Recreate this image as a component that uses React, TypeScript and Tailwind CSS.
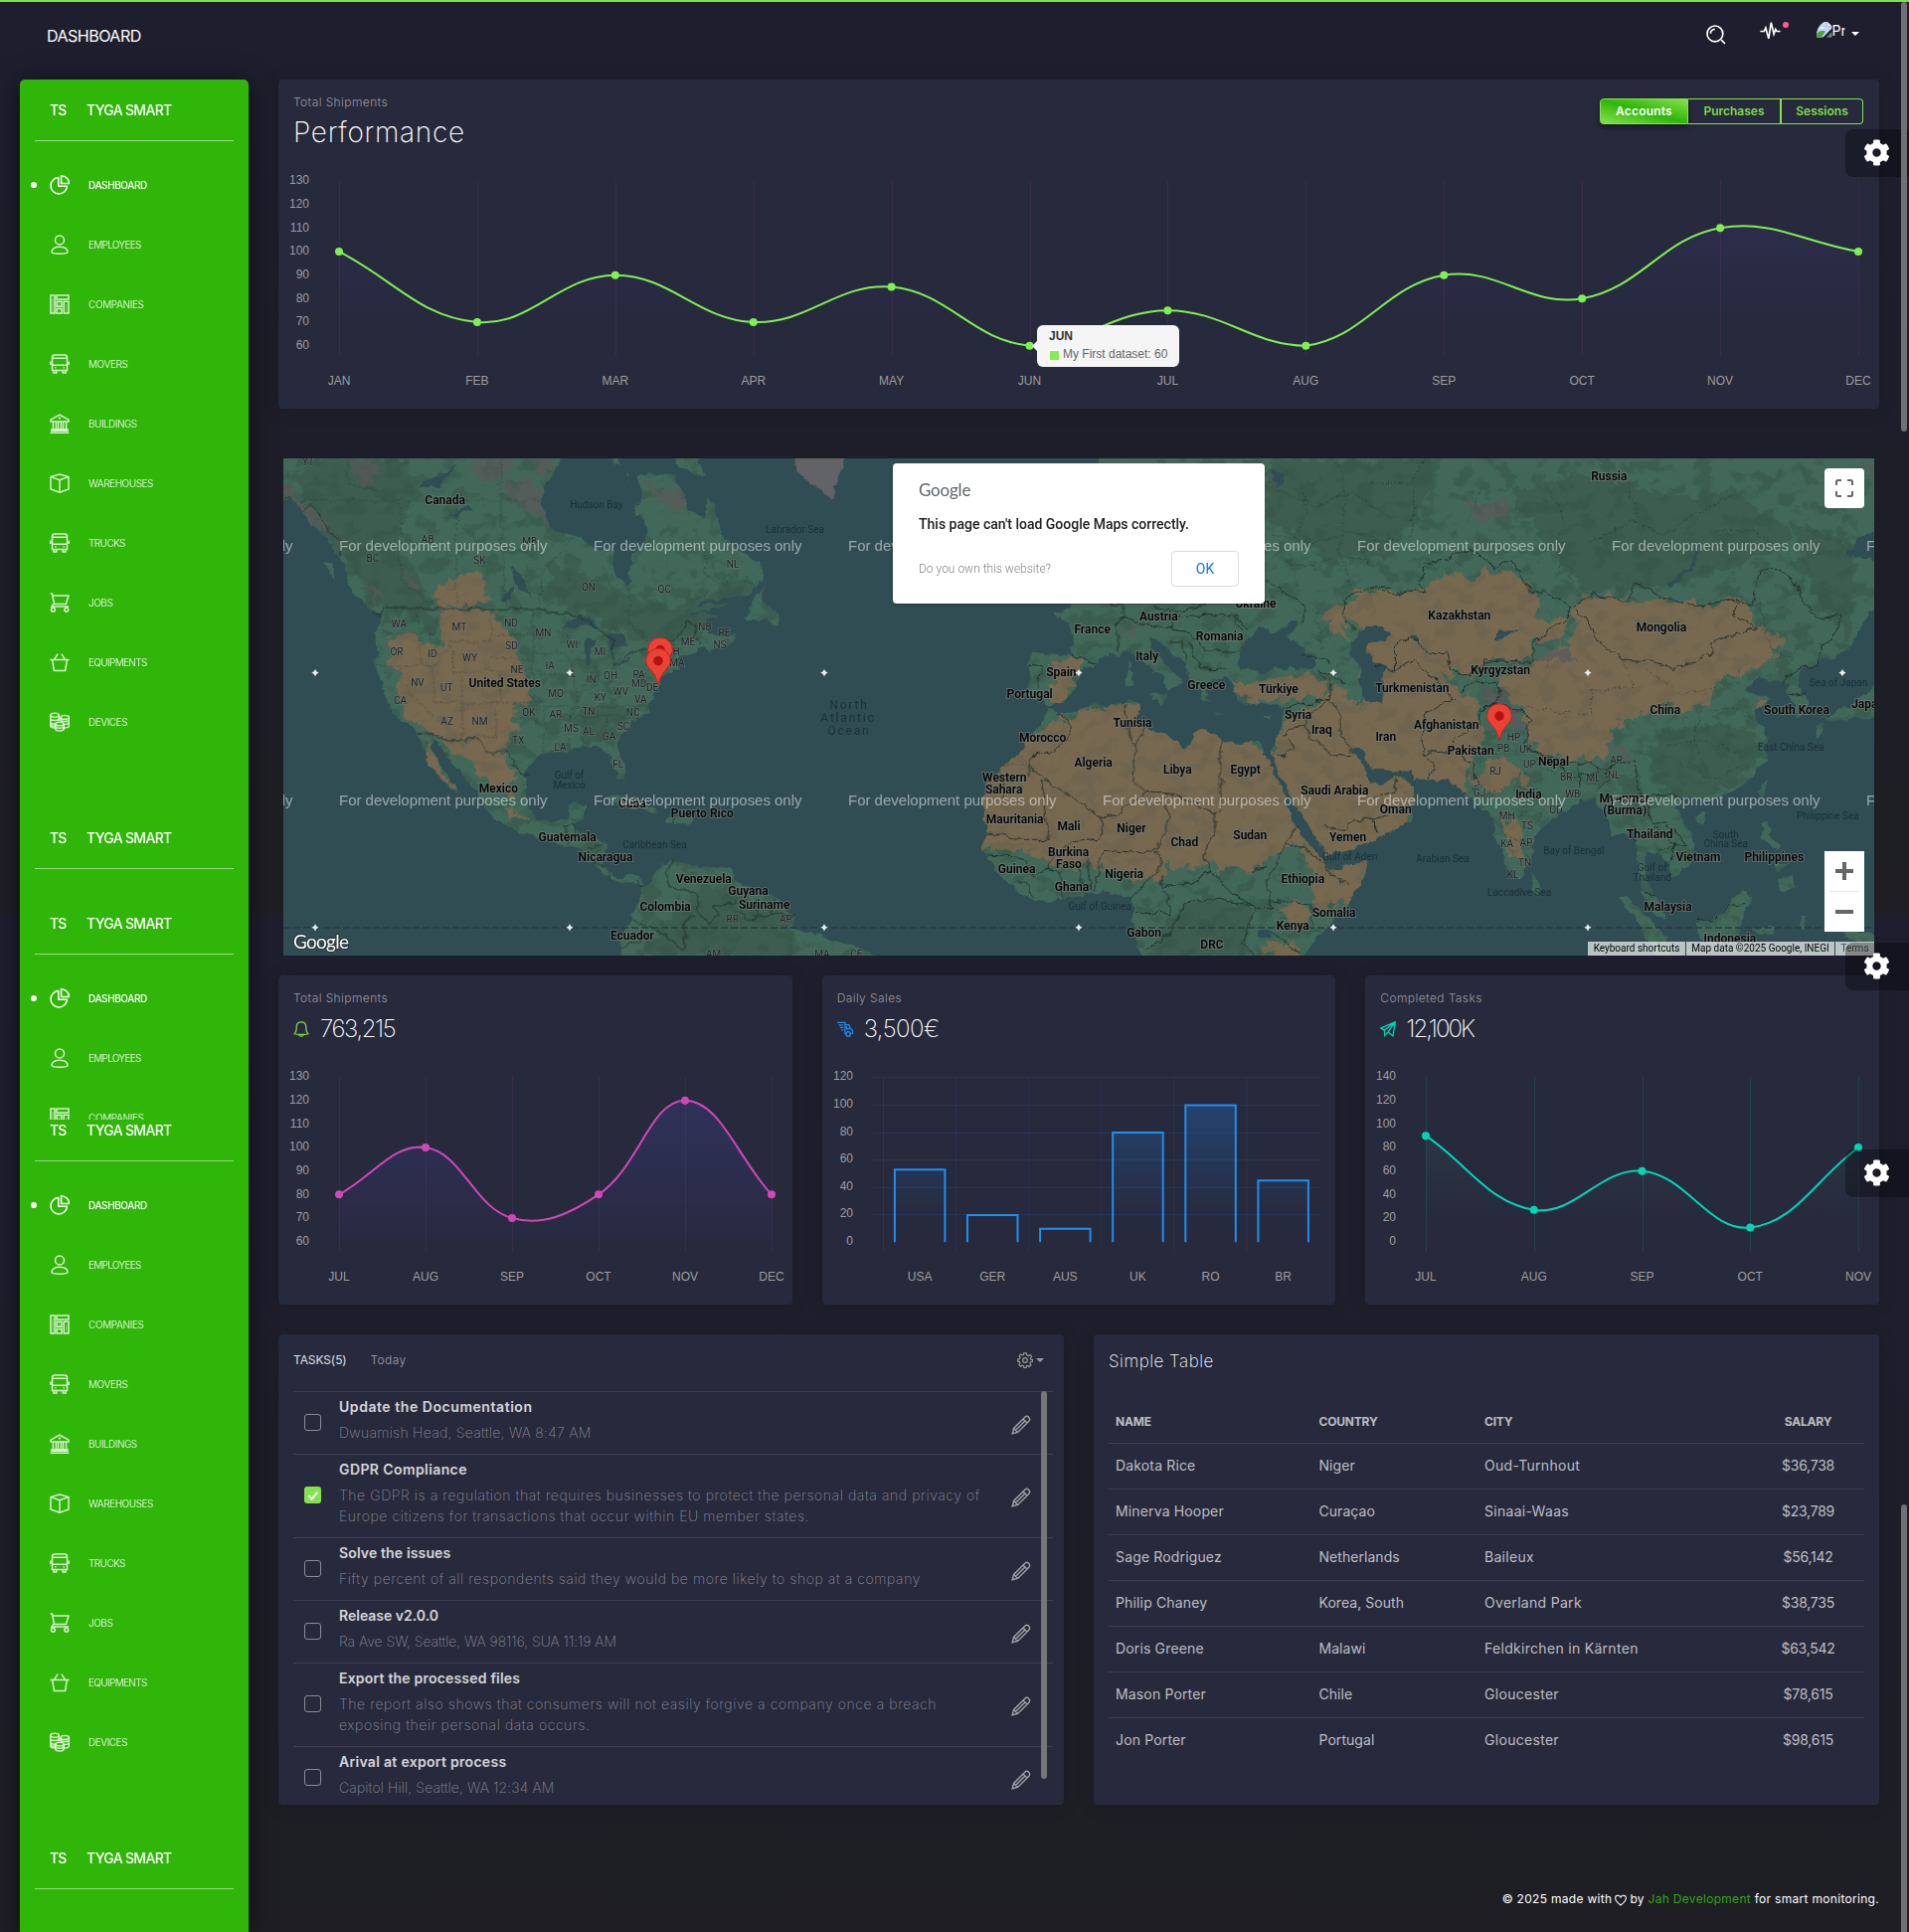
import React from "react";
import { FaCog } from "react-icons/fa";

/* ------------------------------------------------------------------ icons */

type IconName =
  | "pie" | "user" | "tiles" | "bus" | "bank" | "box" | "cart" | "basket" | "coins"
  | "bell" | "delivery" | "send" | "gear" | "pencil" | "heart" | "search" | "wave";

const ICONS: Record<IconName, React.ReactNode> = {
  pie: (
    <>
      <path d="M8.8 2.6A8.2 8.2 0 1 0 17.4 11.2H8.8Z" />
      <path d="M11.6 0.8V8.6H19.4A7.8 7.8 0 0 0 11.6 0.8Z" />
    </>
  ),
  user: (
    <>
      <circle cx="10" cy="5.4" r="4.5" />
      <path d="M2 17.6C2 14 5.2 12.3 10 12.3S18 14 18 17.6C18 19 14 19.2 10 19.2S2 19 2 17.6Z" />
    </>
  ),
  tiles: (
    <>
      <path d="M1 1H5V19H1ZM7 1H19V5H7ZM7 7.3H12V12.2H7ZM7 14.5H12V19H7ZM14.2 7.3H19V19H14.2Z" />
      <path d="M3 4V19M9.5 7.3V12M16.6 10V19" opacity=".35" />
    </>
  ),
  bus: (
    <>
      <path d="M2.5 3.5Q2.5 1 5 1H15Q17.5 1 17.5 3.5V16.5H2.5ZM2.5 4.3H17.5M2.5 11.2H17.5M4 16.5V19H6.8V16.5M13.2 16.5V19H16V16.5M.8 7.5V11M19.2 7.5V11" />
      <path d="M5.2 13.8H6.5M13.5 13.8H14.8" />
    </>
  ),
  bank: (
    <path d="M1 6.2 10 1 19 6.2V8H1ZM3.4 8V15.5M6.4 8V15.5M8.6 8V15.5M11.4 8V15.5M13.6 8V15.5M16.6 8V15.5M2 15.7H18V17.2H2ZM.6 19.2H19.4M10 3.6V5.4M8.8 4.5H11.2" />
  ),
  box: <path d="M10 1 19 3.6V16L10 19.2 1 16V3.6ZM1 3.6 10 6.6 19 3.6M10 6.6V19" />,
  cart: (
    <>
      <path d="M.6 1H2.4L4.6 11.4H16.4L19 3H3M3.8 11.4 2 14H19" />
      <circle cx="3.4" cy="17.2" r="1.9" />
      <circle cx="16.8" cy="17.2" r="1.9" />
    </>
  ),
  basket: <path d="M.4 7.4H19.6M2.6 7.4 4.4 18.4H15.6L17.4 7.4M4.6 7.2 8.2 1.6M15.4 7.2 11.8 1.6" />,
  coins: (
    <>
      <ellipse cx="5" cy="3.2" rx="4.2" ry="2" />
      <path d="M.8 3.2V14C.8 15.2 3 16 5.4 16M9.2 3.2V9M.8 6.6C.8 9.2 9.2 9.2 9.2 6.6M.8 10C.8 12.4 6 12.4 6.5 11.5M.8 12.5C1.5 14.5 5 14.3 5.8 13.8" />
      <ellipse cx="15.2" cy="5.4" rx="4.2" ry="1.9" />
      <path d="M11 5.4V9.4M19.4 5.4V14C19.4 15.2 17 16 14.4 16M11 8C12 10 19.4 10 19.4 8M14 12.4C17 12.6 19.4 12 19.4 10.8" />
      <ellipse cx="10" cy="12" rx="4.2" ry="1.8" />
      <path d="M5.8 12V17C5.8 19.7 14.2 19.7 14.2 17V12M5.8 14.5C6 16.8 14 16.8 14.2 14.5" />
    </>
  ),
  bell: (
    <path d="M1.2 15.6C3.8 14.2 4 12 4 7.5C4 3.5 6.5 1.2 10 1.2S16 3.5 16 7.5C16 12 16.2 14.2 18.8 15.6C18.8 17.2 1.2 17.2 1.2 15.6ZM7.2 17.2C7.6 19.6 12.4 19.6 12.8 17.2" />
  ),
  delivery: (
    <>
      <path d="M.4 1.6H10V15.4H12.4M1.8 4.8H8M3.4 8H8M5 11.2H8M10 4.4H14.6L17 9.6 19.4 11.4V15.6H18M12 6.6V9.6H16.4" />
      <circle cx="14" cy="16.2" r="2.8" />
    </>
  ),
  send: <path d="M1 8.6 19 1 16.2 18.6 10 13.6 6 18 5.4 11.4ZM19 1 5.4 11.4M19 1 10 13.6M6 18 10 13.6" />,
  gear: (
    <>
      <circle cx="10" cy="10" r="2.9" />
      <path d="M8.4 1H11.6L12.2 3.5 14.2 4.4 16.4 3.1 18.2 5.4 16.6 7.5 17.2 9 19.4 9.2V11.6L16.9 12.2 16.1 14 17.4 16.2 15.2 18 13 16.7 11.8 17.1 11.4 19.4H8.6L8.2 17 6.5 16.4 4.4 17.7 2.4 15.6 3.7 13.4 3 12 .8 11.5V8.7L3.1 8.2 3.9 6.4 2.6 4.4 4.6 2.4 6.6 3.7 7.9 3.3Z" />
    </>
  ),
  pencil: (
    <path d="M1.2 18.8 2.6 13.4 13.8 2.2C15.2.8 16.4 1 17.6 2.2S19 4.8 17.8 6.2L6.6 17.4ZM12 4 16 8M14 6 4.4 15.6M2.6 13.4 6.6 17.4" />
  ),
  heart: <path d="M10 18.4C4 13.8 1 10.6 1 6.8C1 1.4 7.8.4 10 5.2C12.2.4 19 1.4 19 6.8C19 10.6 16 13.8 10 18.4Z" />,
  search: (
    <>
      <circle cx="8.9" cy="8.9" r="7.9" />
      <path d="M4.4 8.7A4.4 4.4 0 0 1 8.7 4.4M15.2 15.2 19 19" />
    </>
  ),
  wave: <path d="M.4 10H4L5.6 6.6 8.4 17 10.8 1.6 13.4 12.6 15 8 16.2 10H19.6" />,
};

function Icon({ name, className, width = 1.4 }: { name: IconName; className: string; width?: number }) {
  return (
    <svg viewBox="0 0 20 20" className={className} fill="none" stroke="currentColor" strokeWidth={width}>
      {ICONS[name]}
    </svg>
  );
}

/* ---------------------------------------------------------------- sidebar */

const NAV: [IconName, string, string][] = [
  ["pie", "DASHBOARD", "tracking-[-0.4px]"],
  ["user", "EMPLOYEES", "tracking-[-0.75px]"],
  ["tiles", "COMPANIES", "tracking-[-0.4px]"],
  ["bus", "MOVERS", "tracking-[-0.45px]"],
  ["bank", "BUILDINGS", "tracking-[-0.55px]"],
  ["box", "WAREHOUSES", "tracking-[-0.5px]"],
  ["bus", "TRUCKS", "tracking-[-0.65px]"],
  ["cart", "JOBS", "tracking-[-0.5px]"],
  ["basket", "EQUIPMENTS", "tracking-[-0.7px]"],
  ["coins", "DEVICES", "tracking-[-0.5px]"],
];

function Brand() {
  return (
    <div className="mx-[15px] flex h-[62px] items-center border-b border-white/50 pl-[15px] text-sm font-medium text-white">
      <span className="w-[37px] tracking-[-0.9px]">TS</span>
      <span className="tracking-[-0.68px]">TYGA SMART</span>
    </div>
  );
}

function Nav() {
  return (
    <ul className="pt-[14px]">
      {NAV.map(([icon, label, tracking], i) => (
        <li
          key={label}
          className={
            i === 0
              ? "flex h-[60px] items-center text-[10px] font-medium text-white"
              : "flex h-[60px] items-center text-[10px] text-white/80"
          }
        >
          <span className={i === 0 ? "ml-[11px] size-1.5 rounded-full bg-white" : "ml-[11px] size-1.5"} />
          <Icon name={icon} className="ml-[13px] size-5" width={1.5} />
          <span className={`ml-[19px] ${tracking}`}>{label}</span>
        </li>
      ))}
    </ul>
  );
}

function Sidebar() {
  return (
    <aside className="relative z-10 ml-5 h-[1863px] w-[230px] shrink-0 overflow-hidden rounded-t-[5px] bg-[#2fb608] shadow-[0_2px_22px_0_rgba(0,0,0,0.2),0_2px_30px_0_rgba(0,0,0,0.35)]">
      <div className="h-[732px]">
        <Brand />
        <Nav />
      </div>
      <div className="h-[86px]">
        <Brand />
      </div>
      <div className="h-[228px] overflow-hidden">
        <Brand />
        <Nav />
      </div>
      <div className="-mt-5 h-[732px]">
        <Brand />
        <Nav />
      </div>
      <Brand />
    </aside>
  );
}

/* ----------------------------------------------------------------- charts */

type Pt = { x: number; y: number };
const TOP = 22;
const BOTTOM = 187.7;

function spline(pts: Pt[]) {
  const t = 0.4;
  const clamp = (v: number) => Math.min(BOTTOM, Math.max(TOP, v));
  const ctrl = pts.map((c, i) => {
    const p = pts[i - 1] ?? c;
    const n = pts[i + 1] ?? c;
    const a = Math.hypot(c.x - p.x, c.y - p.y);
    const b = Math.hypot(n.x - c.x, n.y - c.y);
    const fa = (t * a) / (a + b);
    const fb = (t * b) / (a + b);
    return {
      px: c.x - fa * (n.x - p.x),
      py: clamp(c.y - fa * (n.y - p.y)),
      nx: c.x + fb * (n.x - p.x),
      ny: clamp(c.y + fb * (n.y - p.y)),
    };
  });
  return pts
    .map((p, i) =>
      i === 0
        ? `M${p.x} ${p.y}`
        : `C${ctrl[i - 1].nx} ${ctrl[i - 1].ny} ${ctrl[i].px} ${ctrl[i].py} ${p.x} ${p.y}`
    )
    .join("");
}

function YTicks({ min, max, step }: { min: number; max: number; step: number }) {
  const ticks: number[] = [];
  for (let v = max; v >= min; v -= step) ticks.push(v);
  return (
    <g fill="#9e9e9e" fontSize="12" textAnchor="end">
      {ticks.map((v) => (
        <text key={v} x="31" y={TOP + ((max - v) / (max - min)) * (BOTTOM - TOP) + 3.3}>
          {v}
        </text>
      ))}
    </g>
  );
}

type LineProps = {
  id: string;
  width: number;
  labels: string[];
  data: number[];
  min: number;
  max: number;
  step: number;
  color: string;
  grid: string;
  fill: string;
  fillOpacity: number;
  fadeAt: number;
};

function LineChart(p: LineProps) {
  const left = 61;
  const right = p.width - 21;
  const pts = p.data.map((v, i) => ({
    x: left + (i * (right - left)) / (p.data.length - 1),
    y: TOP + ((p.max - v) / (p.max - p.min)) * (BOTTOM - TOP),
  }));
  const d = spline(pts);
  return (
    <svg width={p.width} height="251" className="block font-['Liberation_Sans',sans-serif]">
      <defs>
        <linearGradient id={p.id} gradientUnits="userSpaceOnUse" x1="0" y1="240" x2="0" y2="60">
          <stop offset={p.fadeAt} stopColor={p.fill} stopOpacity="0" />
          <stop offset="1" stopColor={p.fill} stopOpacity={p.fillOpacity} />
        </linearGradient>
      </defs>
      {pts.map((pt, i) => (
        <line key={i} x1={Math.round(pt.x) + 0.5} x2={Math.round(pt.x) + 0.5} y1={TOP} y2="198" stroke={p.grid} />
      ))}
      <path d={`${d}L${right} ${BOTTOM}L${left} ${BOTTOM}Z`} fill={`url(#${p.id})`} />
      <path d={d} fill="none" stroke={p.color} strokeWidth="2" />
      {pts.map((pt, i) => (
        <circle key={i} cx={pt.x} cy={pt.y} r="4" fill={p.color} />
      ))}
      <YTicks min={p.min} max={p.max} step={p.step} />
      <g fill="#9e9e9e" fontSize="12" textAnchor="middle">
        {pts.map((pt, i) => (
          <text key={i} x={pt.x} y="227">
            {p.labels[i]}
          </text>
        ))}
      </g>
    </svg>
  );
}

const BARS: [string, number][] = [
  ["USA", 53],
  ["GER", 20],
  ["AUS", 10],
  ["UK", 80],
  ["RO", 100],
  ["BR", 45],
];

function BarChart() {
  const y = (v: number) => TOP + ((120 - v) / 120) * (BOTTOM - TOP) + 0.8;
  return (
    <svg width="516" height="251" className="block font-['Liberation_Sans',sans-serif]">
      <defs>
        <linearGradient id="bars" gradientUnits="userSpaceOnUse" x1="0" y1="240" x2="0" y2="60">
          <stop offset="0.4" stopColor="#1d8cf8" stopOpacity="0" />
          <stop offset="1" stopColor="#1d8cf8" stopOpacity="0.24" />
        </linearGradient>
      </defs>
      {[120, 100, 80, 60, 40, 20].map((v) => (
        <line key={v} x1="51" x2="501" y1={Math.floor(y(v)) + 0.5} y2={Math.floor(y(v)) + 0.5} stroke="rgba(29,140,248,0.12)" />
      ))}
      {BARS.map(([label, v], i) => {
        const x = 61.5 + i * 73.1;
        return (
          <g key={label}>
            <line x1={x} x2={x} y1={TOP} y2="198" stroke="rgba(29,140,248,0.12)" />
            <path
              d={`M${x + 11.4} ${BOTTOM + 0.5}V${y(v)}H${x + 61.9}V${BOTTOM + 0.5}`}
              fill="url(#bars)"
              stroke="#1f8ef1"
              strokeWidth="2"
            />
            <text x={x + 36.6} y="227" fill="#9e9e9e" fontSize="12" textAnchor="middle">
              {label}
            </text>
          </g>
        );
      })}
      <YTicks min={0} max={120} step={20} />
    </svg>
  );
}

const MONTHS = ["JAN", "FEB", "MAR", "APR", "MAY", "JUN", "JUL", "AUG", "SEP", "OCT", "NOV", "DEC"];
const CARD = "rounded bg-[#27293d] shadow-[0_1px_20px_0_rgba(0,0,0,0.1)]";

function PerformanceCard() {
  return (
    <section className={`relative h-[331px] ${CARD}`}>
      <div className="flex h-20 justify-between pl-[15px] pr-4">
        <div className="pt-[14px]">
          <h5 className="text-xs font-light leading-[18px] tracking-[0.4px] text-[#9a9a9a]">Total Shipments</h5>
          <h2 className="pt-1 text-[28px] font-extralight leading-[34px] tracking-[0.7px] text-white">Performance</h2>
        </div>
        <div className="mt-[19px] flex h-[26px] text-xs font-semibold text-[#7edc48]">
          <div className="flex w-[89px] items-center justify-center rounded-l border border-[#86e14f] bg-[linear-gradient(to_bottom_left,#86e14f,#2fb608,#86e14f)] tracking-[0.2px] text-white shadow-[0_3px_6px_rgba(0,0,0,0.35)]">
            Accounts
          </div>
          <div className="flex w-[94px] items-center justify-center border border-l-0 border-r-2 border-[#86e14f]">Purchases</div>
          <div className="flex w-[82px] items-center justify-center rounded-r border border-l-0 border-[#86e14f]">Sessions</div>
        </div>
      </div>
      <LineChart
        id="perf"
        width={1610}
        labels={MONTHS}
        data={[100, 70, 90, 70, 85, 60, 75, 60, 90, 80, 110, 100]}
        min={60}
        max={130}
        step={10}
        color="#7ff052"
        grid="rgba(225,78,202,0.1)"
        fill="#4848b0"
        fillOpacity={0.13}
        fadeAt={0.4}
      />
      <div className="absolute left-[763px] top-[247px] h-[42px] w-[143px] rounded-md bg-[#f5f5f5] pl-3 pt-1 font-['Liberation_Sans',sans-serif] text-xs">
        <span className="absolute -left-[5px] top-4 border-y-[5px] border-r-[5px] border-y-transparent border-r-[#f5f5f5]" />
        <div className="font-bold leading-[15px] text-[#333]">JUN</div>
        <div className="mt-[3px] flex items-center leading-[14px] text-[#666]">
          <span className="mr-[3px] mt-0.5 size-[11px] border border-white bg-[#7ff052]" />
          My First dataset: 60
        </div>
      </div>
    </section>
  );
}

type StatProps = { title: string; icon: IconName; tint: string; value: string; tracking: string; children: React.ReactNode };

function StatCard({ title, icon, tint, value, tracking, children }: StatProps) {
  return (
    <section className={`h-[331px] ${CARD}`}>
      <div className="h-20 pl-[15px] pt-[14px]">
        <h5 className="text-xs font-light leading-[18px] tracking-[0.4px] text-[#9a9a9a]">{title}</h5>
        <h3 className={`flex items-center pt-[5px] text-[24px] font-extralight leading-[34px] text-white ${tracking}`}>
          <Icon name={icon} className={tint} width={1.6} />
          {value}
        </h3>
      </div>
      {children}
    </section>
  );
}

/* -------------------------------------------------------------------- map */

type Frame = "west" | "mid" | "east";
const FRAMES: Record<Frame, [number, number, number, number]> = {
  west: [0.3954, 0.3333, -5, -6],
  mid: [0.3333, 0.3333, 595, -6],
  east: [0.3444, 0.3476, 1095, -6],
};
const matrix = (f: Frame) => `translate(${FRAMES[f][2]} ${FRAMES[f][3]}) scale(${FRAMES[f][0]} ${FRAMES[f][1]})`;

const LAND: Record<Frame, string[]> = {
  west: [
    "M-20,-30L735,-30L700,60L680,100L672,150L680,200L700,240L740,245L770,260L800,285L850,300L855,370L885,410L900,390L895,310L930,280L940,235L920,190L905,185L925,120L915,80L940,65L1010,70L1030,120L1045,170L1080,200L1100,135L1115,190L1130,260L1150,280L1200,315L1230,345L1232,385L1200,425L1130,440L1075,450L1040,500L1075,480L1115,495L1085,510L1100,545L1135,560L1165,545L1140,585L1100,600L1085,585L1060,600L1020,615L1010,640L1020,655L985,665L965,700L955,735L940,760L945,785L900,815L870,855L865,885L882,940L880,985L865,985L850,950L845,915L820,890L780,885L740,900L700,905L650,925L630,960L630,1030L640,1080L660,1110L700,1115L735,1100L740,1065L785,1060L775,1100L755,1125L760,1145L800,1160L838,1175L825,1230L830,1250L860,1285L910,1270L930,1300L870,1300L840,1285L800,1240L760,1195L700,1180L640,1155L560,1115L520,1070L515,1030L480,990L440,930L415,890L385,860L390,900L420,950L440,990L460,1030L425,1005L400,960L380,940L375,900L352,845L330,820L290,785L275,740L250,660L250,550L260,490L235,470L190,420L160,340L155,310L120,260L85,220L60,180L30,145L-20,135Z",
    "M1235,410L1205,450L1188,500L1240,505L1270,525L1275,490L1255,470L1230,450Z",
    "M1000,1225L985,1245L955,1260L940,1300L925,1310L920,1345L900,1400L875,1460L868,1560L1575,1560L1470,1490L1410,1475L1380,1455L1315,1440L1310,1400L1270,1345L1200,1310L1160,1290L1150,1255L1100,1255L1030,1240Z",
    "M830,1040L870,1035L960,1070L965,1085L900,1075L850,1050Z",
    "M990,1095L1060,1105L1050,1120L985,1118Z",
    "M850,10L870,10L868,40L855,40ZM1000,-10L1060,-10L1085,70L1060,65L1020,40ZM885,60L893,65L890,85Z",
    "M1035,480L1060,465L1150,455L1100,475ZM120,330L140,335L145,385L125,350ZM195,430L240,440L255,475L225,460Z",
  ],
  mid: [
    "M690,-30L1620,-30L1620,1110L1560,1140L1460,1190L1355,1220L1345,1180L1290,1100L1240,1010L1200,925L1190,900L1205,880L1228,830L1230,775L1210,765L1165,755L1125,765L1090,740L1075,690L1060,680L1015,690L1035,715L1000,720L1010,755L985,755L985,720L950,690L940,640L890,600L850,565L830,555L830,580L850,610L880,640L930,690L905,705L885,720L870,680L830,650L790,620L765,590L730,615L690,610L670,635L640,650L610,690L600,730L565,755L520,765L500,740L480,745L455,735L470,660L462,620L475,605L540,608L590,610L600,560L590,520L560,500L535,485L590,470L600,400Z",
    "M515,795L525,770L560,790L600,780L640,765L720,760L795,750L800,780L790,800L820,835L880,850L900,870L940,890L960,870L960,845L1000,838L1040,865L1100,880L1150,870L1170,885L1180,920L1200,960L1240,1050L1260,1110L1300,1170L1345,1225L1370,1260L1430,1245L1487,1235L1480,1270L1440,1350L1390,1410L1320,1480L1275,1560L825,1560L790,1470L775,1430L785,1380L770,1345L700,1325L640,1335L600,1345L540,1350L485,1358L430,1320L380,1280L340,1225L323,1180L340,1140L325,1060L330,1000L380,950L440,910L460,860L490,820Z",
    "M765,630L775,630L773,650L765,655ZM760,660L780,665L775,705L762,705ZM830,735L880,730L870,758ZM1020,787L1055,792L1050,796ZM1170,797L1200,790L1190,802Z",
  ],
  east: [
    "M0,-30L1500,-30L1500,215L1420,250L1385,300L1490,315L1490,430L1440,480L1400,560L1340,600L1290,610L1250,640L1240,680L1275,720L1280,750L1240,770L1235,730L1210,700L1215,670L1190,660L1160,660L1130,650L1090,690L1120,710L1170,710L1120,745L1130,780L1155,830L1150,890L1100,950L1050,985L990,1010L960,1000L910,1000L885,1030L920,1080L945,1130L940,1180L880,1230L870,1190L835,1160L795,1155L800,1230L850,1330L860,1350L830,1350L790,1280L775,1180L765,1100L700,1110L690,1060L650,1000L610,1010L560,1040L510,1080L470,1120L465,1180L430,1240L400,1220L370,1140L345,1040L320,1030L265,980L230,950L160,945L85,945L70,935L0,900Z",
    "M470,1215L493,1250L488,1275L465,1265Z",
    "M718,1285L760,1295L820,1360L880,1430L870,1480L840,1480L780,1370Z",
    "M945,1360L1000,1350L1080,1265L1110,1290L1085,1340L1070,1400L1000,1420L960,1410Z",
    "M1135,1070L1160,1070L1160,1110L1190,1140L1180,1150L1140,1120ZM1190,1240L1225,1220L1230,1260L1200,1275ZM1170,1180L1210,1190L1190,1220Z",
    "M1150,950L1155,960L1140,1000L1130,980ZM940,1050L975,1042L965,1070L945,1068Z",
    "M1290,790L1320,790L1300,835ZM1310,770L1400,730L1490,660L1490,760L1380,775Z",
    "M1110,1380L1180,1370L1170,1400L1130,1395ZM1250,1345L1265,1350L1255,1390ZM1350,1375L1470,1395L1470,1440L1400,1410Z",
  ],
};

const DESERT: Record<Frame, string[]> = {
  west: [
    "M410,475L540,475L600,560L610,620L640,720L640,750L600,760L610,820L590,870L570,900L550,915L505,865L440,870L385,850L350,820L310,760L310,690L290,640L290,560L320,540L350,560L400,600L440,570L400,520Z",
    "M400,420L450,370L530,370L530,450L460,470L400,460Z",
    "M410,870L500,870L560,900L610,960L590,1040L540,1010L510,960L450,910ZM375,865L400,930L440,990L462,1028L430,1010L380,940Z",
    "M560,1060L600,1070L635,1105L600,1100Z",
  ],
  mid: [
    "M490,840L600,790L720,765L795,745L810,780L800,800L820,825L880,840L900,860L940,880L950,860L960,835L1000,828L1040,855L1100,870L1180,880L1190,920L1210,960L1250,1050L1270,1110L1310,1170L1345,1215L1370,1250L1430,1235L1507,1225L1500,1270L1450,1350L1330,1380L1320,1300L1300,1200L1250,1180L1190,1220L1160,1260L1000,1245L920,1260L880,1240L860,1290L800,1290L700,1250L640,1250L600,1250L520,1240L440,1200L320,1195L303,1180L320,1140L305,1060L310,1000L360,950L430,900L450,860Z",
    "M1225,810L1340,760L1380,700L1440,740L1490,770L1620,780L1620,1110L1460,1210L1345,1240L1325,1180L1270,1100L1230,1000L1190,920L1205,880Z",
    "M1085,700L1170,690L1300,670L1370,690L1340,740L1230,745L1150,765L1100,735Z",
    "M520,640L560,620L640,640L600,670L610,700L570,760L530,750L540,690Z",
    "M1410,490L1450,430L1520,415L1620,425L1620,760L1540,760L1545,700L1490,590L1560,560L1530,525L1480,530Z",
    "M1210,1370L1310,1360L1310,1430L1260,1440ZM1180,1480L1270,1480L1260,1540L1170,1510ZM1360,480L1420,460L1420,560L1370,540Z",
  ],
  east: [
    "M-20,400L60,410L160,405L180,360L240,350L300,370L330,340L420,350L460,380L490,440L480,490L560,480L560,530L470,550L470,600L330,600L280,650L200,640L260,700L320,720L310,760L320,830L290,900L270,985L160,965L85,965L-20,920Z",
    "M580,455L640,410L760,430L850,420L950,440L1060,425L1110,450L1120,500L1200,540L1180,590L1080,640L1000,660L980,720L900,760L860,730L780,760L690,800L680,880L560,895L480,850L440,780L440,740L380,690L360,650L470,610L560,560L600,500Z",
    "M300,920L360,880L430,900L400,960L360,985L290,970Z",
    "M-60,1000L0,970L70,925L80,970L135,1000L110,1060L0,1125L-60,1140Z",
    "M380,1060L420,1060L440,1180L410,1170ZM420,930L470,940L460,970L420,960ZM1120,720L1160,715L1130,745Z",
  ],
};

/* Oman lies outside the mainland outline of the eastern frame */
const OMAN = "M-60,1000L0,970L70,935L80,970L125,1000L100,1060L0,1115L-60,1140Z";

const ROCK: Record<Frame, string[]> = {
  west: [
    "M490,-20L560,-20L600,40L540,90L500,70ZM570,95L640,80L690,150L695,230L640,180L590,140ZM640,-20L735,-20L700,60L660,60ZM935,90L1030,110L1045,175L970,160L930,120ZM13,100L50,130L110,200L160,270L130,250L60,180L13,140ZM180,20L240,20L250,90L215,100ZM215,395L270,430L250,450ZM310,360L350,390L340,410Z",
  ],
  mid: ["M730,530L800,525L770,550Z"],
  east: [
    "M320,680L380,700L460,790L440,810L380,760ZM690,850L740,850L770,900L720,890ZM450,600L560,570L600,600L500,610ZM270,150L370,140L400,180L310,200ZM1440,20L1470,20L1470,90Z",
  ],
};

const FOREST: Record<Frame, string[]> = {
  west: [
    "M50,20L330,20L340,130L300,260L380,420L400,560L350,500L250,460L170,330L90,210L60,130Z",
    "M690,330L880,420L1000,470L1180,380L1220,390L1060,560L900,560L760,480L690,450Z",
    "M1080,1300L1310,1400L1300,1518L900,1518L1000,1400Z",
    "M720,800L860,740L900,800L800,870Z",
  ],
  mid: ["M930,1360L1090,1350L1140,1380L1120,1540L820,1540L870,1420Z", "M1190,20L1560,20L1560,300L1380,330L1250,240L1180,200Z"],
  east: [
    "M0,20L200,20L130,200L0,260ZM400,110L640,60L860,120L1060,110L1240,240L1060,330L840,400L620,400L500,240Z",
    "M840,800L1100,790L1150,880L1000,1000L880,1000L800,900ZM700,930L770,930L830,1060L760,1060ZM1230,200L1420,280L1400,540L1300,440Z",
  ],
};

const WATER: Record<Frame, string[]> = {
  west: [
    "M720,530L765,490L800,505L815,530L770,520L745,530ZM785,560L805,560L790,640L778,645ZM830,545L880,550L885,585L855,590L850,610ZM850,650L895,620L890,638ZM590,340L620,370L645,440L625,420L600,390ZM355,110L390,75L460,45L420,80L410,105ZM430,190L480,165L490,175L445,192ZM565,450L600,400L590,450Z",
  ],
  mid: [
    "M1100,600L1125,555L1165,530L1200,545L1240,520L1275,505L1265,540L1240,555L1320,610L1325,655L1270,650L1210,650L1170,665L1110,655L1090,640Z",
    "M1430,575L1480,525L1530,525L1560,550L1490,580L1480,600L1520,650L1540,690L1530,755L1480,750L1455,700L1470,670L1440,620Z",
    "M1440,895L1460,890L1500,950L1560,965L1620,960L1620,1000L1570,975L1530,1010L1500,1000L1470,940Z",
    "M1195,50L1230,60L1235,100L1215,105ZM1155,1440L1195,1440L1190,1465L1160,1465ZM1170,900L1180,905L1205,950L1195,945Z",
  ],
  east: ["M0,505L50,515L50,545L0,550ZM0,600L40,620L30,650L0,640ZM945,280L955,290L930,345L870,390L860,385L920,340ZM355,540L370,515L430,510L400,525L370,545ZM110,530L130,530L130,560ZM660,410L680,410L680,425Z"],
};

const BORDERS: Record<Frame, string[]> = {
  west: [
    "M240,485L262,490L262,472H667L690,485L765,490L825,545L850,570L850,645L895,605L935,600L980,570L1010,565L1040,515L1060,520L1060,560L1072,580",
    "M352,845L385,848L440,870H480V862L505,865L550,915L562,900L578,902L612,965L638,972",
    "M13,135L35,140L60,180L88,155L130,240L162,275L160,315",
    "M1005,1225L985,1275L1000,1315L1065,1330L1065,1380L1090,1420L1120,1400L1110,1365L1150,1360L1165,1350",
    "M900,1410L985,1455L1030,1505L1035,1410L1065,1400M1175,1380L1190,1410L1250,1395L1310,1395M870,1500L940,1460M1215,1350L1220,1395M1265,1350L1255,1390",
    "M735,1180L760,1145L755,1120L720,1130L740,1160M790,1195L838,1175M800,1240L830,1250M840,1270L845,1290M910,1290L925,1305M1000,1095L1002,1118",
  ],
  mid: [
    "M467,975V920L540,900L590,855L585,800L540,790M467,948L640,1075L685,1105L740,1085L815,1025L780,985L785,880L760,820L755,760",
    "M815,1025L885,1025L1025,1090M1025,1160V1085L1043,1083V865M885,1030L880,1140L848,1195L800,1205L740,1205L690,1198L675,1250L660,1325M780,890L810,850L808,830",
    "M685,1105L685,1150L670,1168L600,1175L560,1200L530,1230L520,1260M530,992H502L522,1165H420L380,1150L340,1150M390,1050V1000",
    "M1025,1160L1005,1165L990,1220L1020,1270L1080,1335L1150,1370L1200,1370L1180,1300L1210,1250L1240,1180L1275,1120M1130,1265L1165,1250L1185,1250",
    "M848,1200L865,1240L820,1300L765,1350M865,1270L870,1310L930,1305L1020,1265M870,1320L900,1390H790M930,1360L1040,1345L1150,1370L1110,1480L1140,1518M1195,1450L1285,1510M1355,1240L1370,1270L1430,1300",
    "M1320,1370V1430M1200,1350L1260,1360L1320,1365M930,1360L900,1440L820,1500M1240,1180L1300,1200L1350,1240M340,1215L420,1220L470,1250L480,1280L520,1255L560,1265L570,1350M610,1240L630,1330M640,1225L650,1320M430,1290L460,1310L485,1345",
    "M585,612L668,635M470,640L505,645L490,700L487,715M730,600L735,560L720,520L760,500M740,500L820,520L890,530L900,500L1000,490L1080,490L1120,530M710,455L740,460L755,500M840,465L900,480L1000,465L960,455M890,530L950,540L1000,600L1095,600M885,570L930,570L940,640M950,570L980,650L1060,655M1075,490L1110,540M1180,380L1240,430L1300,460L1290,510M1160,380L1190,400",
    "M1230,770L1340,750L1375,745L1375,700L1340,655L1380,670L1420,700M1375,750L1395,780L1400,840L1440,900M1375,745L1310,790L1300,820L1230,850M1285,830L1385,915L1440,910M1250,860L1265,890L1240,910L1210,910M1353,1130L1420,1135L1445,1110L1520,1100L1545,1090M1500,1110L1520,1145M1290,608L1370,635M1410,490L1420,440L1510,400L1560,410M1420,450L1410,490L1450,535",
  ],
  east: [
    "M590,450L640,410L740,430L775,375L850,420L950,445L1050,425L1075,435L1055,475L1120,505L990,550L990,580L950,605L880,625L820,605L735,598L650,545L640,495Z",
    "M0,385L60,410L100,400L160,405L140,380L155,325L285,285L320,300L360,335L410,310L465,405L500,400L580,445L560,495L510,510L500,540L470,550L470,605L330,600L280,645L235,630L220,580L170,580L110,535L68,550V630L10,620",
    "M1060,425L1110,440L1130,345L1190,335L1235,370L1255,435L1305,480L1370,470L1350,540L1310,560L1305,610L1235,635L1195,665M1220,710L1265,695",
    "M68,630L120,605L200,670L240,715L200,730L155,755L150,860L185,910L160,945M150,870L230,865L240,830L310,790L320,740L380,710L360,660L290,670L260,690M280,650L320,610L370,605",
    "M310,760L350,720L440,750L465,770L450,800L450,855L560,895L600,900L640,890L665,920L770,890L775,970L800,1000L850,990L910,1000M250,870L290,900L310,960L270,985M600,905L605,935L665,930M600,930L610,1010M650,985L690,950L690,920M450,855L500,880L570,920",
    "M760,1080L770,1130M800,1000L820,1080L885,1130L870,1200M820,1075L860,1070L920,1140L840,1145L835,1160M800,1270L830,1280M950,1350L1000,1355L1040,1310L1090,1305M70,940V980L0,1000M0,1060L15,1100",
  ],
};

const REGIONS: Record<Frame, string> = {
  west: "M13,145H672M310,145V380L400,470M453,145V470M568,18V230L578,470M178,18V100L250,115M667,470V370L755,250M892,400V520L930,560M1085,310V370L1115,390H1230M262,545H410M352,472L360,560V642M250,642H395V755H675M310,642V690L388,790M395,642L440,572V660H565V755M440,572H540V472M540,550H648M540,618L640,625M648,470V600L650,720L675,760V910M466,660V870M555,760V855H500M598,760V800L680,820M655,607H730M640,670H740M710,540L770,580M735,630H780M745,640L760,730L740,800V890M808,650V700L760,740M675,765H940M860,650L840,720M740,797L880,795M830,797L845,875M780,800V880M880,640L990,640",
  mid: "M390,942H465M1180,100L1330,160L1440,120L1560,200M1200,250L1320,270L1440,240L1560,280M1240,330L1330,350L1400,310L1500,330M1280,60L1300,180L1250,300L1280,420M1400,20L1420,150L1400,300L1440,400M1330,480L1350,600M1043,1048H1225",
  east: "M0,90L120,85L150,20M130,90L110,250L0,260M280,200L320,100M500,70L560,200L520,300L600,380M640,260L760,200L860,240L940,180L1060,120M750,100L780,200M1000,230L1100,220L1200,280L1240,330M640,690L760,680L730,600M640,690L640,760L450,740M800,630L900,700L1000,680L1080,620M900,780L960,740L1060,740L1120,780M860,850L960,830L1080,870M900,900L1000,950L1090,900M960,750L940,830L980,930M1040,640L1100,700M1130,440L1160,560L1230,600M360,980L460,960L520,1000M400,1060L470,1030L520,1060M380,1110L460,1120M290,880L360,870L440,860M480,910L600,940",
};

const COUNTRIES: Record<Frame, [string, number, number][]> = {
  west: [
    ["Canada", 424, 142], ["United States", 576, 694], ["Mexico", 560, 1014], ["Cuba", 900, 1057], ["Puerto Rico", 1078, 1087],
    ["Guatemala", 735, 1161], ["Nicaragua", 832, 1221], ["Venezuela", 1082, 1287], ["Guyana", 1195, 1323], ["Suriname", 1236, 1365],
    ["Colombia", 984, 1369], ["Ecuador", 900, 1457],
  ],
  mid: [
    ["Ukraine", 1149, 454], ["Austria", 856, 493], ["France", 656, 533], ["Romania", 1040, 553], ["Italy", 821, 613], ["Spain", 562, 662],
    ["Greece", 1000, 700], ["Türkiye", 1218, 712], ["Portugal", 467, 728], ["Syria", 1277, 790], ["Iraq", 1348, 837], ["Tunisia", 777, 815],
    ["Morocco", 506, 861], ["Algeria", 659, 934], ["Libya", 913, 955], ["Egypt", 1118, 955], ["Western", 391, 981], ["Sahara", 389, 1017],
    ["Saudi Arabia", 1387, 1019], ["Mauritania", 422, 1105], ["Mali", 585, 1126], ["Niger", 774, 1134], ["Chad", 934, 1175],
    ["Sudan", 1132, 1153], ["Yemen", 1427, 1160], ["Burkina", 584, 1205], ["Faso", 585, 1241], ["Guinea", 428, 1256], ["Nigeria", 752, 1271],
    ["Ethiopia", 1291, 1286], ["Ghana", 594, 1309], ["Somalia", 1385, 1387], ["Kenya", 1261, 1426], ["Gabon", 812, 1447], ["DRC", 1017, 1484],
  ],
  east: [
    ["Russia", 692, 67], ["Kazakhstan", 255, 472], ["Mongolia", 845, 506], ["Kyrgyzstan", 375, 630], ["Turkmenistan", 117, 681],
    ["China", 856, 743], ["South Korea", 1240, 743], ["Japan", 1448, 728], ["Afghanistan", 217, 787], ["Iran", 40, 821], ["Pakistan", 288, 861],
    ["Nepal", 530, 894], ["India", 457, 990], ["Myanmar", 737, 1001], ["(Burma)", 738, 1036], ["Oman", 69, 1032], ["Thailand", 811, 1103],
    ["Vietnam", 952, 1170], ["Philippines", 1174, 1170], ["Malaysia", 864, 1313], ["Indonesia", 1045, 1407],
  ],
};

const STATES: Record<Frame, [string, number, number][]> = {
  west: [
    ["YT", 76, 28], ["AB", 380, 262], ["MB", 639, 268], ["BC", 240, 318], ["SK", 512, 325], ["ON", 789, 405], ["QC", 982, 411], ["NL", 1156, 337],
    ["WA", 307, 516], ["MT", 460, 525], ["ND", 592, 513], ["MN", 674, 543], ["WI", 747, 579], ["MI", 818, 601], ["SD", 593, 583], ["OR", 301, 602],
    ["ID", 392, 607], ["WY", 487, 620], ["NE", 607, 654], ["IA", 691, 644], ["NV", 354, 693], ["UT", 428, 708], ["IL", 748, 668], ["IN", 796, 684],
    ["OH", 845, 674], ["PA", 917, 669], ["MD", 917, 696], ["DE", 951, 710], ["WV", 871, 722], ["VA", 921, 745], ["KY", 819, 738], ["MO", 706, 726],
    ["CA", 310, 748], ["OK", 637, 784], ["AR", 705, 789], ["TN", 789, 782], ["NC", 902, 783], ["AZ", 429, 810], ["NM", 512, 810], ["MS", 745, 831],
    ["AL", 789, 842], ["SC", 878, 825], ["GA", 841, 857], ["TX", 610, 867], ["LA", 717, 889], ["FL", 864, 940], ["NB", 1085, 525], ["PE", 1134, 543],
    ["NS", 1123, 579], ["ME", 1042, 572], ["NH", 1003, 602], ["MA", 1014, 634], ["RR", 1155, 1407], ["AP", 1291, 1408], ["AM", 1107, 1514],
    ["MA", 1383, 1514], ["CE", 1470, 1514],
  ],
  mid: [],
  east: [
    ["HP", 414, 822], ["PB", 383, 855], ["UK", 449, 858], ["UP", 460, 901], ["AR", 713, 889], ["RJ", 360, 920], ["BR", 567, 939], ["ML", 646, 940],
    ["NL", 706, 934], ["GJ", 314, 985], ["WB", 586, 988], ["OD", 537, 1032], ["MH", 394, 1050], ["TS", 453, 1078], ["KA", 394, 1132],
    ["AP", 450, 1128], ["TN", 446, 1186], ["KL", 411, 1221],
  ],
};

const SEAS: Record<Frame, [string, number, number][]> = {
  west: [["Hudson Bay", 809, 157], ["Labrador Sea", 1314, 233], ["Gulf of", 740, 974], ["Mexico", 740, 1002], ["Caribbean Sea", 957, 1184]],
  mid: [["Gulf of Aden", 1433, 1219], ["Gulf of Guinea", 679, 1370]],
  east: [
    ["Sea of Japan", 1362, 665], ["East China Sea", 1223, 854], ["Philippine Sea", 1331, 1051], ["South", 1033, 1105], ["China Sea", 1033, 1133],
    ["Arabian Sea", 206, 1175], ["Bay of Bengal", 589, 1153], ["Laccadive Sea", 430, 1274], ["Gulf of", 818, 1202], ["Thailand", 818, 1229],
  ],
};

const FRAME_KEYS: Frame[] = ["east", "mid", "west"];

function Shapes({ data, fill, opacity = 1 }: { data: Record<Frame, string[]>; fill: string; opacity?: number }) {
  return (
    <g fill={fill} opacity={opacity}>
      {FRAME_KEYS.map((f) => (
        <g key={f} transform={matrix(f)}>
          {data[f].map((d, i) => (
            <path key={i} d={d} />
          ))}
        </g>
      ))}
    </g>
  );
}

function Labels({ data, dy }: { data: Record<Frame, [string, number, number][]>; dy: number }) {
  return (
    <>
      {FRAME_KEYS.flatMap((f) =>
        data[f].map(([text, x, y], i) => (
          <text key={f + i} x={x * FRAMES[f][0] + FRAMES[f][2]} y={y * FRAMES[f][1] + FRAMES[f][3] + dy}>
            {text}
          </text>
        ))
      )}
    </>
  );
}

function Pin({ x, y }: { x: number; y: number }) {
  return (
    <g transform={`translate(${x} ${y})`}>
      <path
        d="M0 0C-1.4 -6.4 -3.4 -10.4 -6.6 -14.2C-10 -18.2 -12.4 -20.4 -12.4 -24.6A12.4 12.2 0 0 1 12.4 -24.6C12.4 -20.4 10 -18.2 6.6 -14.2C3.4 -10.4 1.4 -6.4 0 0Z"
        fill="#ea4335"
        stroke="#c5221f"
        strokeWidth="1"
      />
      <circle cx="0" cy="-24.4" r="4.8" fill="#b31412" />
    </g>
  );
}

function MapDrawing() {
  const cols = [-1, 0, 1, 2, 3, 4, 5, 6];
  return (
    <svg width="1600" height="500" viewBox="0 0 1600 500" className="block font-['Roboto',sans-serif]">
      <defs>
        <filter id="rough" x="0" y="0" width="1600" height="500" filterUnits="userSpaceOnUse" colorInterpolationFilters="sRGB">
          <feTurbulence type="fractalNoise" baseFrequency="0.09" numOctaves="4" seed="4" />
          <feDisplacementMap in="SourceGraphic" scale="9" xChannelSelector="R" yChannelSelector="G" />
        </filter>
        <filter id="ragged" x="0" y="0" width="1600" height="500" filterUnits="userSpaceOnUse" colorInterpolationFilters="sRGB">
          <feTurbulence type="fractalNoise" baseFrequency="0.08" numOctaves="4" seed="12" />
          <feDisplacementMap in="SourceGraphic" scale="20" xChannelSelector="R" yChannelSelector="G" />
        </filter>
        <filter id="terrain" x="0" y="0" width="1600" height="500" filterUnits="userSpaceOnUse" colorInterpolationFilters="sRGB">
          <feTurbulence type="fractalNoise" baseFrequency="0.05 0.07" numOctaves="5" seed="9" />
          <feColorMatrix values="0 0 0 0 0.21  0 0 0 0 0.32  0 0 0 0 0.27  8 0 0 0 -4.2" />
        </filter>
        <clipPath id="land">
          {FRAME_KEYS.flatMap((f) => LAND[f].map((d, i) => <path key={f + i} d={d} transform={matrix(f)} />))}
          <path d={OMAN} transform={matrix("east")} />
        </clipPath>
      </defs>
      <rect width="1600" height="500" fill="#304d54" />
      <g filter="url(#rough)">
        <Shapes data={LAND} fill="#42685a" />
        <g clipPath="url(#land)">
          <rect width="1600" height="500" filter="url(#terrain)" opacity="0.35" />
          <g filter="url(#ragged)">
            <Shapes data={FOREST} fill="#3a5a4c" opacity={0.7} />
            <Shapes data={DESERT} fill="#776850" />
            <Shapes data={ROCK} fill="#5a5a5b" opacity={0.75} />
          </g>
          <rect width="1600" height="500" filter="url(#terrain)" opacity="0.1" />
        </g>
        <path d="M1305,-10L1450,-10L1420,80L1412,142L1370,110L1330,70Z" transform={matrix("west")} fill="#626366" />
        <Shapes data={WATER} fill="#304d54" />
      </g>
      <g filter="url(#rough)" fill="none" stroke="#1d2a26" strokeLinejoin="round">
        {FRAME_KEYS.map((f) => (
          <g key={f} transform={matrix(f)}>
            {BORDERS[f].map((d, i) => (
              <path key={i} d={d} strokeWidth="0.9" vectorEffect="non-scaling-stroke" />
            ))}
            <path d={REGIONS[f]} strokeWidth="0.8" strokeDasharray="2 2" opacity="0.55" vectorEffect="non-scaling-stroke" />
          </g>
        ))}
      </g>
      <line x1="0" x2="1600" y1="472" y2="472" stroke="#2a3d40" strokeWidth="1.4" strokeDasharray="7 3" />
      <g fontSize="10" fill="#1a3037" textAnchor="middle">
        <Labels data={SEAS} dy={3.6} />
      </g>
      <g fontSize="12" fill="#1c3138" textAnchor="middle" letterSpacing="1.8">
        <text x="569" y="252">North</text>
        <text x="568" y="265">Atlantic</text>
        <text x="569" y="278">Ocean</text>
      </g>
      <g fontSize="10" fill="#1f2426" stroke="#737b77" strokeOpacity="0.5" strokeWidth="1.6" textAnchor="middle" className="[paint-order:stroke]">
        <Labels data={STATES} dy={3.8} />
      </g>
      <g fontSize="12" fontWeight="600" fill="#050606" stroke="#747b78" strokeOpacity="0.65" strokeWidth="2" textAnchor="middle" className="[paint-order:stroke]">
        <Labels data={COUNTRIES} dy={4.3} />
      </g>
      <g fontSize="15" fill="#fff" fillOpacity="0.5" className="font-['Liberation_Sans',sans-serif]">
        {cols.flatMap((c) =>
          [93, 349].map((y) => (
            <text key={`${c}-${y}`} x={56 + c * 256} y={y} textLength="209.5">
              For development purposes only
            </text>
          ))
        )}
      </g>
      <g fill="#e9eeee">
        {cols.flatMap((c) =>
          [215.6, 471.8].map((y) => (
            <path key={`${c}-${y}`} transform={`translate(${32 + c * 256} ${y})`} d="M0 -3.6L1.3 -1.3L3.6 0L1.3 1.3L0 3.6L-1.3 1.3L-3.6 0L-1.3 -1.3Z" />
          ))
        )}
      </g>
      <Pin x={379} y={217} />
      <Pin x={377} y={228} />
      <Pin x={1223} y={283.5} />
      <text x="10" y="492.5" fontSize="19" fill="#fff" stroke="#263236" strokeWidth="2" className="font-['Lato',sans-serif] [paint-order:stroke]" textLength="56">
        Google
      </text>
    </svg>
  );
}

function MapPanel() {
  return (
    <div className="relative mx-[5px] mt-[50px] h-[500px] overflow-hidden font-['Roboto',sans-serif]">
      <MapDrawing />
      <div className="absolute left-[613px] top-[5px] h-[141px] w-[374px] rounded bg-white px-[26px] pt-4 shadow-[0_1px_3px_rgba(0,0,0,0.3)]">
        <div className="font-['Lato',sans-serif] text-[17px] leading-[21px] tracking-[-0.2px] text-[#5f6368]">Google</div>
        <div className="mt-[13px] text-[14px] font-medium leading-[22px] text-[#202124]">This page can't load Google Maps correctly.</div>
        <div className="mt-4 flex items-center justify-between">
          <span className="text-xs font-light text-[#858585]">Do you own this website?</span>
          <span className="flex h-9 w-[68px] items-center justify-center rounded border border-[#dadce0] text-sm text-[#1a73e8]">OK</span>
        </div>
      </div>
      <div className="absolute left-[1550px] top-[10px] flex size-10 items-center justify-center rounded-sm bg-white">
        <svg viewBox="0 0 18 18" className="size-[18px]" fill="none" stroke="#666" strokeWidth="2">
          <path d="M1 6V2.5Q1 1 2.5 1H6M12 1H15.5Q17 1 17 2.5V6M17 12V15.5Q17 17 15.5 17H12M6 17H2.5Q1 17 1 15.5V12" />
        </svg>
      </div>
      <div className="absolute left-[1550px] top-[395px] flex h-[81px] w-10 flex-col items-center bg-white">
        <svg viewBox="0 0 18 18" className="mt-[11px] size-[18px]" stroke="#666" strokeWidth="4">
          <path d="M0 9H18M9 0V18" />
        </svg>
        <span className="mt-[11px] h-px w-[30px] bg-[#e6e6e6]" />
        <span className="mt-[18px] h-1 w-[18px] bg-[#666]" />
      </div>
      <div className="absolute bottom-0 right-0 flex h-[14px] gap-px text-[10px] leading-[14px] text-black">
        <span className="w-[98px] bg-[#f5f5f5]/70 text-center">Keyboard shortcuts</span>
        <span className="w-[149px] bg-[#f5f5f5]/70 text-center">Map data ©2025 Google, INEGI</span>
        <span className="w-[39px] bg-[#f5f5f5]/70 text-center text-[#444]">Terms</span>
      </div>
    </div>
  );
}

/* ---------------------------------------------------------- tasks + table */

type Task = { title: string; titleTracking: string; lines: string[]; tracking: string; done?: boolean };

const TASKS: Task[] = [
  {
    title: "Update the Documentation",
    titleTracking: "tracking-[0.55px]",
    lines: ["Dwuamish Head, Seattle, WA 8:47 AM"],
    tracking: "tracking-[0.27px]",
  },
  {
    title: "GDPR Compliance",
    titleTracking: "tracking-[0.4px]",
    lines: [
      "The GDPR is a regulation that requires businesses to protect the personal data and privacy of",
      "Europe citizens for transactions that occur within EU member states.",
    ],
    tracking: "tracking-[0.57px]",
    done: true,
  },
  {
    title: "Solve the issues",
    titleTracking: "tracking-[0.14px]",
    lines: ["Fifty percent of all respondents said they would be more likely to shop at a company"],
    tracking: "tracking-[0.57px]",
  },
  {
    title: "Release v2.0.0",
    titleTracking: "tracking-[0px]",
    lines: ["Ra Ave SW, Seattle, WA 98116, SUA 11:19 AM"],
    tracking: "tracking-[-0.04px]",
  },
  {
    title: "Export the processed files",
    titleTracking: "tracking-[0.2px]",
    lines: ["The report also shows that consumers will not easily forgive a company once a breach", "exposing their personal data occurs."],
    tracking: "tracking-[0.57px]",
  },
  {
    title: "Arival at export process",
    titleTracking: "tracking-[0.3px]",
    lines: ["Capitol Hill, Seattle, WA 12:34 AM"],
    tracking: "tracking-[0.12px]",
  },
];

function TasksCard() {
  return (
    <section className={`relative h-[473px] overflow-hidden px-[15px] ${CARD}`}>
      <div className="flex h-[57px] items-center pb-[5px] text-xs">
        <span className="w-[77.5px] tracking-[-0.1px] text-white/85">TASKS(5)</span>
        <span className="font-light tracking-[0.4px] text-[#a3a4ab]">Today</span>
        <Icon name="gear" className="ml-auto size-4 text-[#9a9a9a]" width={1.5} />
        <span className="ml-[3px] mr-[5px] border-x-4 border-t-4 border-x-transparent border-t-[#9a9a9a]" />
      </div>
      {TASKS.map((t) => (
        <div key={t.title} className="-mr-1 flex items-center border-t border-white/10">
          <span
            className={
              t.done
                ? "mb-0.5 ml-[11px] flex size-[17px] shrink-0 items-center justify-center rounded-[3px] bg-[#86e14f]"
                : "mb-0.5 ml-[11px] size-[17px] shrink-0 rounded-[3px] border border-[#8b8c96]"
            }
          >
            {t.done && (
              <svg viewBox="0 0 12 12" className="size-3" fill="none" stroke="#fff" strokeWidth="2">
                <path d="M1.5 6.2 4.6 9.4 10.5 2.6" />
              </svg>
            )}
          </span>
          <div className="ml-[18px] pb-[11px] pt-[5px] text-sm">
            <p className={`mb-[5px] font-semibold leading-5 text-white/80 ${t.titleTracking}`}>{t.title}</p>
            <div className={`font-extralight leading-[21px] text-[#8a8c97] ${t.tracking}`}>
              {t.lines.map((l) => (
                <p key={l} className="whitespace-nowrap">
                  {l}
                </p>
              ))}
            </div>
          </div>
          <Icon name="pencil" className="ml-auto mr-[22px] mt-[3px] size-5 shrink-0 text-[#a0a1a8]" width={1.4} />
        </div>
      ))}
      <span className="absolute left-[767px] top-[57px] h-[390px] w-1.5 rounded-full bg-[#75767b]" />
    </section>
  );
}

const ROWS = [
  ["Dakota Rice", "Niger", "Oud-Turnhout", "$36,738"],
  ["Minerva Hooper", "Curaçao", "Sinaai-Waas", "$23,789"],
  ["Sage Rodriguez", "Netherlands", "Baileux", "$56,142"],
  ["Philip Chaney", "Korea, South", "Overland Park", "$38,735"],
  ["Doris Greene", "Malawi", "Feldkirchen in Kärnten", "$63,542"],
  ["Mason Porter", "Chile", "Gloucester", "$78,615"],
  ["Jon Porter", "Portugal", "Gloucester", "$98,615"],
];

function TableCard() {
  return (
    <section className={`h-[473px] px-[15px] ${CARD}`}>
      <h4 className="h-[66px] pt-[15px] text-[17px] font-extralight leading-6 tracking-[0.5px] text-white">Simple Table</h4>
      <div className="grid h-11 grid-cols-[204.5px_166.5px_270px_1fr] items-center border-b border-white/10 pl-[7px] text-xs font-bold tracking-[-0.2px] text-white/70">
        <span>NAME</span>
        <span>COUNTRY</span>
        <span>CITY</span>
        <span className="pr-px text-center">SALARY</span>
      </div>
      {ROWS.map((r, i) => (
        <div
          key={r[0]}
          className={
            i < ROWS.length - 1
              ? "grid h-[46px] grid-cols-[204.5px_166.5px_270px_1fr] items-center border-b border-white/10 pb-0.5 pl-[7px] text-sm text-white/70"
              : "grid h-[46px] grid-cols-[204.5px_166.5px_270px_1fr] items-center pb-0.5 pl-[7px] text-sm text-white/70"
          }
        >
          <span className="tracking-[0.15px]">{r[0]}</span>
          <span className="tracking-[0.05px]">{r[1]}</span>
          <span className="tracking-[0.3px]">{r[2]}</span>
          <span className="pr-px text-center tracking-[-0.25px]">{r[3]}</span>
        </div>
      ))}
    </section>
  );
}

/* ------------------------------------------------------------------- page */

function Header() {
  return (
    <header className="flex h-20 border-t-2 border-[#84dd4e] pl-[47px] text-white">
      <span className="pt-[22px] text-base leading-6 tracking-[-0.5px]">DASHBOARD</span>
      <Icon name="search" className="ml-auto mt-[23px] size-5" width={1.7} />
      <div className="relative ml-[34px] mt-[19px]">
        <Icon name="wave" className="size-[21px]" width={1.6} />
        <span className="absolute -right-[8px] top-px size-1.5 rounded-full bg-[#fd5d93]" />
      </div>
      <div className="ml-[36px] mt-[18px] flex h-[30px] w-[30px] overflow-hidden rounded-full text-sm">
        <svg viewBox="0 0 16 16" className="mt-0.5 size-4 shrink-0">
          <path d="M0 5Q3 1 7 0H11L15.5 4.5V8L8 15.5H0Z" fill="#c3d6f5" />
          <path d="M0 15.5V12Q4 7 9 9.5L5 15.5Z" fill="#4da43a" />
          <path d="M11 0V4.5H15.5Z" fill="#fff" stroke="#999" strokeWidth=".6" />
          <path d="M3 7Q5 4 7.5 6.5Z" fill="#fff" />
          <path d="M16 6V16H6Z" fill="#1f1e2d" />
          <path d="M10 15.5L15.5 10V15.5Z" fill="#aaa" opacity=".7" />
        </svg>
        <span className="pt-px leading-5">Profile</span>
      </div>
      <span className="ml-[5.5px] mr-[50px] mt-[30px] h-0 border-x-4 border-t-4 border-x-transparent border-t-white" />
    </header>
  );
}

function SettingsTab({ className }: { className: string }) {
  return (
    <div className={`absolute right-0 z-20 flex h-12 w-16 items-center rounded-l-lg bg-black/30 pb-[2px] pl-[18px] ${className}`}>
      <FaCog className="size-[27px] text-white" />
    </div>
  );
}

export default function App() {
  return (
    <div className="relative h-[1943px] w-[1920px] overflow-hidden bg-[linear-gradient(#1e1e2f_0,#1e1e24_918px,#1e1e2f_918px,#1e1e2d_1126px,#1e1e2f_1126px,#1e1e24_1943px)] font-['Inter',sans-serif]">
      <Header />
      <div className="flex">
        <Sidebar />
        <main className="ml-[30px] w-[1610px]">
          <PerformanceCard />
          <MapPanel />
          <div className="mt-5 grid grid-cols-3 gap-[30px]">
            <StatCard title="Total Shipments" icon="bell" tint="mr-[11px] size-4 text-[#7edc48]" value="763,215" tracking="tracking-[-1.4px]">
              <LineChart
                id="ship"
                width={517}
                labels={MONTHS.slice(6)}
                data={[80, 100, 70, 80, 120, 80]}
                min={60}
                max={130}
                step={10}
                color="#d048b6"
                grid="rgba(225,78,202,0.1)"
                fill="#4848b0"
                fillOpacity={0.24}
                fadeAt={0.2}
              />
            </StatCard>
            <StatCard title="Daily Sales" icon="delivery" tint="mr-[11px] size-4 text-[#1f8ef1]" value="3,500€" tracking="tracking-[-0.5px]">
              <BarChart />
            </StatCard>
            <StatCard title="Completed Tasks" icon="send" tint="mr-[10px] size-4 text-[#00d6b4]" value="12,100K" tracking="tracking-[-2px]">
              <LineChart
                id="done"
                width={517}
                labels={MONTHS.slice(6, 11)}
                data={[90, 27, 60, 12, 80]}
                min={0}
                max={140}
                step={20}
                color="#00d6b4"
                grid="rgba(0,242,195,0.12)"
                fill="#428679"
                fillOpacity={0.17}
                fadeAt={0.4}
              />
            </StatCard>
          </div>
          <div className="mt-[30px] grid grid-cols-2 gap-[30px]">
            <TasksCard />
            <TableCard />
          </div>
          <footer className="mt-[86px] flex items-center justify-end text-xs leading-[18px] tracking-[0.3px] text-white">
            © 2025 made with
            <Icon name="heart" className="mx-[3px] mt-0.5 size-3" width={1.8} />
            by&nbsp;<span className="text-[#2fa510]">Jah Development</span>&nbsp;for smart monitoring.
          </footer>
        </main>
      </div>
      <SettingsTab className="top-[130px]" />
      <SettingsTab className="top-[948px]" />
      <SettingsTab className="top-[1156px]" />
      <span className="absolute left-[1912px] top-0.5 z-30 h-[432px] w-1.5 rounded-full bg-[#707075]" />
      <span className="absolute left-[1912px] top-[1513px] z-30 h-[440px] w-1.5 rounded-full bg-[#707075]" />
    </div>
  );
}
